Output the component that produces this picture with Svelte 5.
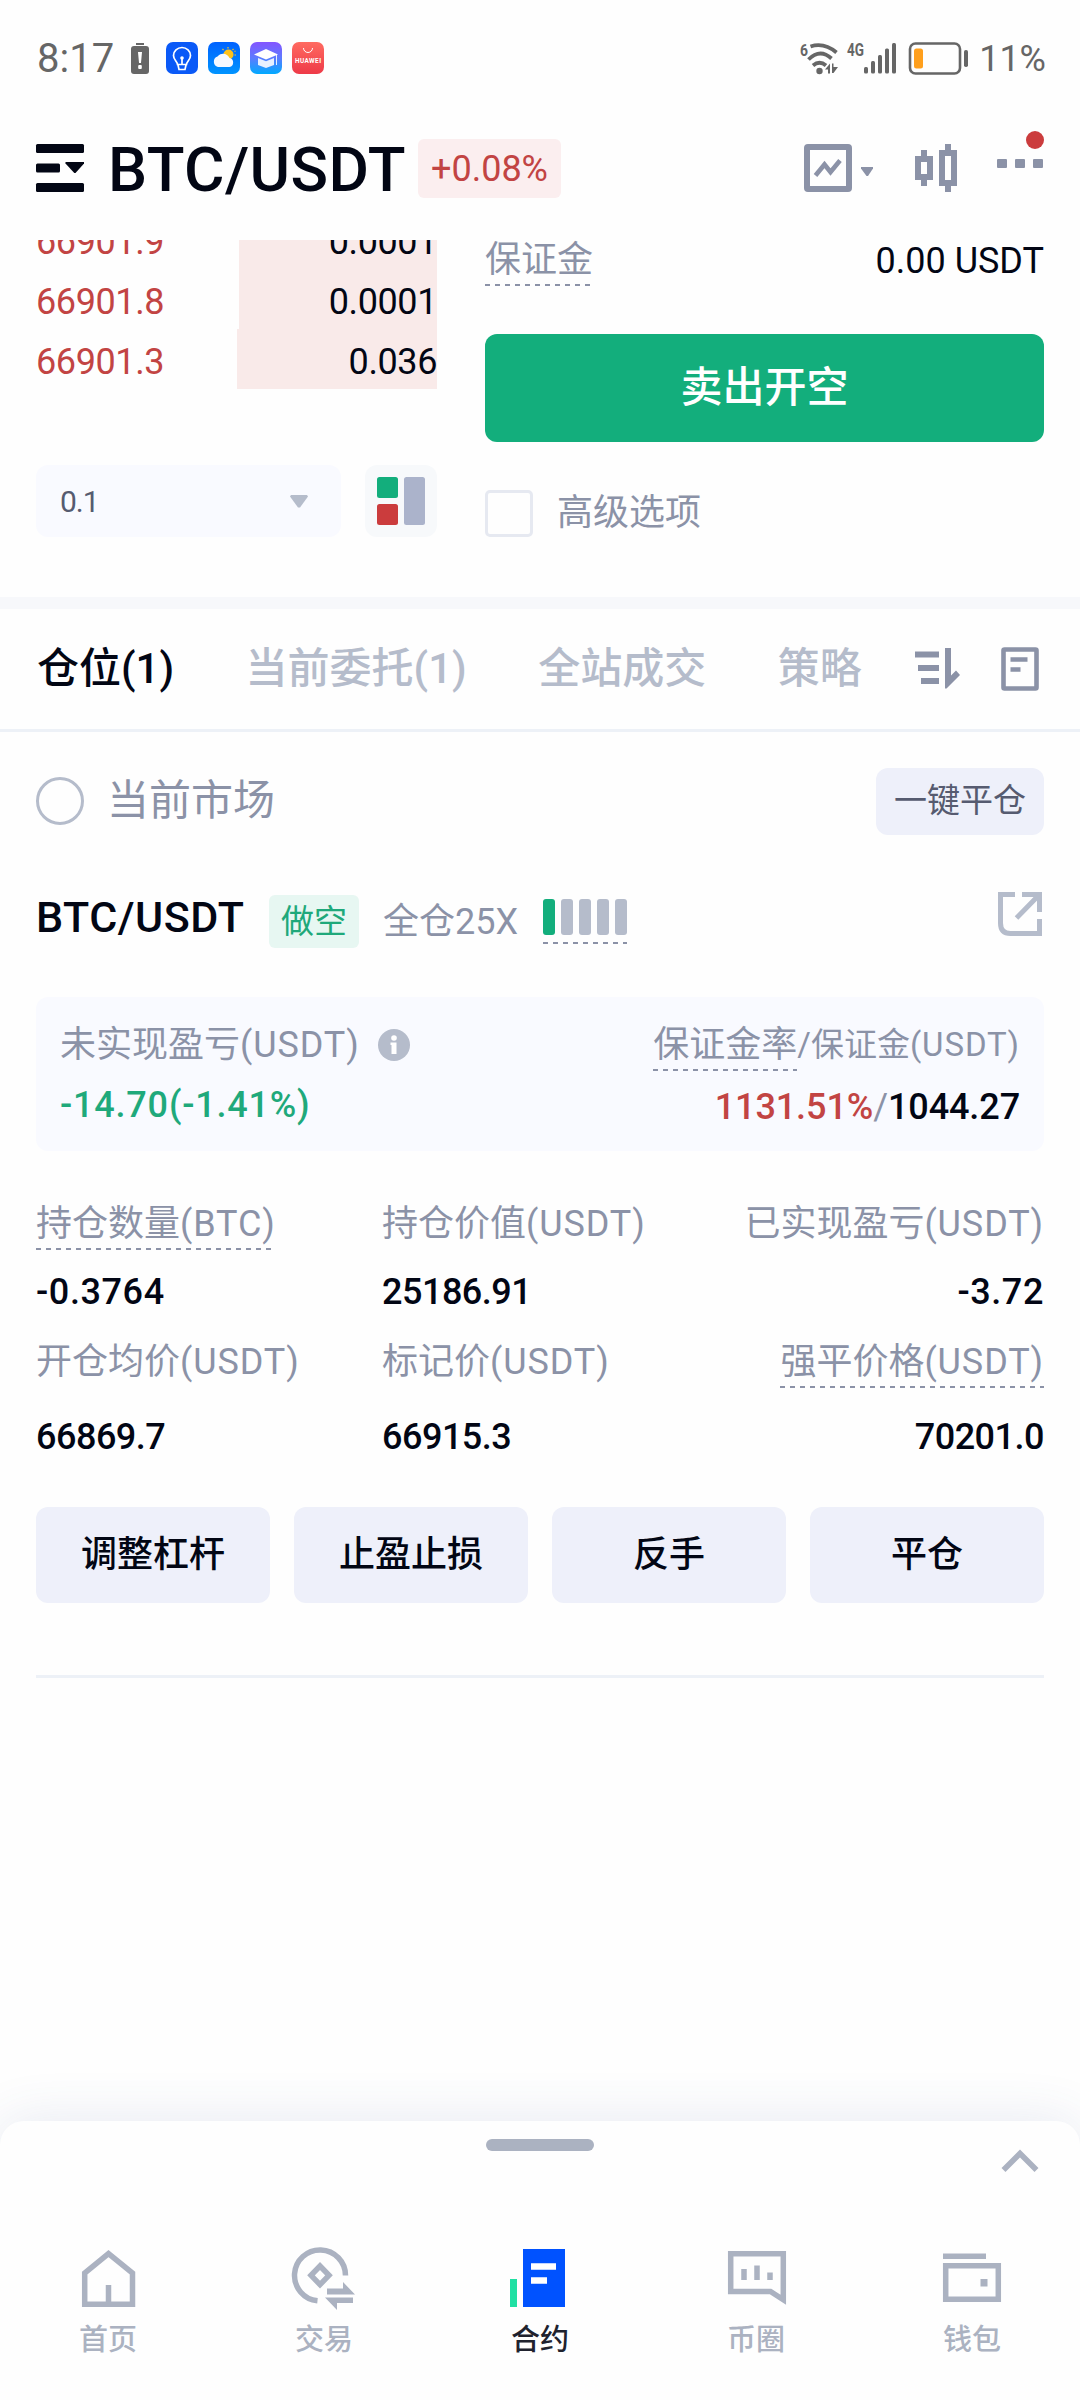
<script>
    let activeTab = 0;
    let onlyCurrent = false;
    let advanced = false;
    let activeNav = 2;

    const asks = [
        { price: '66901.9', amount: '0.0001', depth: 198 },
        { price: '66901.8', amount: '0.0001', depth: 198 },
        { price: '66901.3', amount: '0.036', depth: 200 }
    ];

    const tabs = ['仓位(1)', '当前委托(1)', '全站成交', '策略'];

    // two groups of three columns, labels above values
    const stats = [
        [
            { name: '持仓数量', unit: '(BTC)', value: '-0.3764', hint: true },
            { name: '持仓价值', unit: '(USDT)', value: '25186.91' },
            { name: '已实现盈亏', unit: '(USDT)', value: '-3.72' }
        ],
        [
            { name: '开仓均价', unit: '(USDT)', value: '66869.7' },
            { name: '标记价', unit: '(USDT)', value: '66915.3' },
            { name: '强平价格', unit: '(USDT)', value: '70201.0', hint: true }
        ]
    ];

    const actions = ['调整杠杆', '止盈止损', '反手', '平仓'];
    const nav = ['首页', '交易', '合约', '币圈', '钱包'];
</script>

<div class="page">
    <div class="status">
        <span class="time">8:17</span>
        <svg class="low" width="18" height="31" viewBox="0 0 18 31">
            <rect x="5" y="0" width="8" height="2" fill="#666" />
            <rect x="0" y="3" width="18" height="28" rx="3" fill="#666" />
            <path d="M7 9h4l-1 11H8z" fill="#fff" />
            <rect x="7.2" y="22" width="3.6" height="4" rx="1" fill="#fff" />
        </svg>
        <div class="apps">
            <svg width="32" height="32" viewBox="0 0 32 32">
                <rect width="32" height="32" rx="7" fill="#0a59f7" />
                <path d="M11.500 22.500c0-3-4-4.500-4-9a8.500 8 0 0 1 17 0c0 4.500-4 6-4 9zM12 23l1 4.500h6l1-4.500M16 17v5" fill="none" stroke="#fff" stroke-width="1.700" />
                <circle cx="16" cy="16" r="1.800" fill="#fff" />
            </svg>
            <svg width="32" height="32" viewBox="0 0 32 32">
                <defs>
                    <linearGradient id="sky" x2="0" y2="1"><stop stop-color="#0062ff" /><stop offset="1" stop-color="#0094ff" /></linearGradient>
                </defs>
                <rect width="32" height="32" rx="7" fill="url(#sky)" />
                <circle cx="20.500" cy="12.500" r="5" fill="#ffc21a" />
                <path d="M20 5v1.500M14.500 7l1 1.200M25.500 7l-1 1M28 13h-1.500M26.500 9.500l1-.5" stroke="#ffc21a" stroke-width="1.200" />
                <path d="M10 25a5.500 5.500 0 0 1-.5-10.500A7 7 0 0 1 21.500 16a4.600 4.600 0 0 1 0 9z" fill="#f6f9ff" />
            </svg>
            <svg width="32" height="32" viewBox="0 0 32 32">
                <defs>
                    <linearGradient id="edu" x2="0" y2="1"><stop stop-color="#8455ff" /><stop offset=".5" stop-color="#5d7bff" /><stop offset="1" stop-color="#00aaff" /></linearGradient>
                </defs>
                <rect width="32" height="32" rx="7" fill="url(#edu)" />
                <path d="M4 12.500L16 7l12 5.500-12 5z" fill="#fff" />
                <path d="M8 16l8 3.300 8-3.300v7l-8 3-8-3z" fill="#e8f0ff" />
                <path d="M26.500 13v10" stroke="#e8f0ff" stroke-width="1" />
            </svg>
            <svg width="32" height="32" viewBox="0 0 32 32">
                <defs>
                    <linearGradient id="shop" x2="0" y2="1"><stop stop-color="#ff6a60" /><stop offset="1" stop-color="#ee3a48" /></linearGradient>
                </defs>
                <rect width="32" height="32" rx="7" fill="url(#shop)" />
                <path d="M11.500 6a4.500 4.500 0 0 0 9 0" fill="none" stroke="#fff" stroke-width="1" />
                <text x="16" y="20.500" font-size="6.400" font-weight="700" fill="#fff" text-anchor="middle" textLength="26">HUAWEI</text>
            </svg>
        </div>
        <div class="signals">
            <svg width="168" height="34" viewBox="0 0 168 34" fill="#666">
                <text x="0" y="14.500" font-size="17" font-weight="700" textLength="8" lengthAdjust="spacingAndGlyphs">6</text>
                <g fill="none" stroke="#666" stroke-width="3.800">
                    <path d="M10.500 5.500Q24 1 36.500 11.500" />
                    <path d="M8.500 18.500Q20 7 31.500 17.500" />
                    <path d="M13 24.500Q19.500 19 26 24.500" />
                </g>
                <circle cx="19.500" cy="30" r="3.200" />
                <path d="M25 28.500l5-6v10h-2v-4zM32 22.500h1.500v3.500h4.500l-4.500 6h-1.500z" />
                <text x="47" y="14.500" font-size="18" font-weight="700" textLength="17" lengthAdjust="spacingAndGlyphs">4G</text>
                <rect x="64" y="26" width="4" height="6.500" rx="1.500" />
                <rect x="71" y="20" width="4" height="12.500" rx="1.500" />
                <rect x="78" y="14" width="4" height="18.500" rx="1.500" />
                <rect x="85" y="7.500" width="4" height="25" rx="1.500" />
                <rect x="92" y="2" width="4" height="30.500" rx="1.500" />
                <rect x="110" y="2.500" width="50" height="30" rx="5.500" fill="none" stroke="#666" stroke-width="2.600" />
                <rect x="114" y="7.500" width="9" height="20" rx="2.500" fill="#ff9f1c" />
                <rect x="164" y="9" width="4" height="17" rx="1.800" />
            </svg>
            <span class="percent">11%</span>
        </div>
    </div>

    <header>
        <svg width="48" height="48" viewBox="0 0 48 48" fill="#020614">
            <rect width="48" height="9" rx="1.500" />
            <rect y="19.500" width="24" height="9" rx="1.500" />
            <path d="M29.500 18h18.500v1.500l-8.500 9.500h-1.200l-8.800-9.500z" />
            <rect y="39" width="48" height="9" rx="1.500" />
        </svg>
        <h1>BTC/USDT</h1>
        <span class="change">+0.08%</span>
        <div class="tools">
            <svg width="69" height="48" viewBox="0 0 69 48">
                <rect x="3" y="3" width="42" height="42" rx="1" fill="none" stroke="#8b92a7" stroke-width="6" />
                <path d="M11.500 31.500L20.500 20.500l6 7.500 9.500-11.500" fill="none" stroke="#8b92a7" stroke-width="4.600" />
                <path d="M57 23h12v1.500L64 32h-1.500l-5.500-7.500z" fill="#8b92a7" />
            </svg>
            <svg width="42" height="48" viewBox="0 0 42 48" fill="#8b92a7">
                <path fill-rule="evenodd" d="M6 6h6v6h6v24h-6v6H6v-6H0V12h6zM6 18v12h6V18z" />
                <path fill-rule="evenodd" d="M30 0h6v6h6v36h-6v6h-6v-6h-6V6h6zM30 12v24h6V12z" />
            </svg>
            <div class="more">
                <i></i><i></i><i></i>
                <b class="dot"></b>
            </div>
        </div>
    </header>

    <section class="trade">
        <div class="book">
            <div class="asks">
                {#each asks as row}
                    <div class="ask">
                        <span class="price">{row.price}</span>
                        <span class="amount" style="width: {row.depth}px">{row.amount}</span>
                    </div>
                {/each}
            </div>
            <div class="book-controls">
                <div class="precision">
                    <span>0.1</span>
                    <svg width="18" height="13" viewBox="0 0 18 13"><path d="M1 0h16l1 1.500L10 12.500H8L0 1.500z" fill="#b5bccb" /></svg>
                </div>
                <div class="layout">
                    <svg width="48" height="48" viewBox="0 0 48 48">
                        <rect width="21" height="21" rx="2.500" fill="#13ae7c" />
                        <rect y="27" width="21" height="21" rx="2.500" fill="#cb3c3d" />
                        <rect x="27" width="21" height="48" rx="2.500" fill="#abb3cb" />
                    </svg>
                </div>
            </div>
        </div>
        <div class="order">
            <div class="margin-row">
                <span class="hint">保证金</span>
                <span class="margin-value">0.00 USDT</span>
            </div>
            <button class="sell">卖出开空</button>
            <div class="advanced" on:click={() => (advanced = !advanced)}>
                <span class="checkbox {advanced ? 'checked' : ''}"></span>
                <span>高级选项</span>
            </div>
        </div>
    </section>

    <div class="tabs">
        {#each tabs as tab, index}
            <span class="tab {activeTab === index ? 'active' : ''}" on:click={() => (activeTab = index)}>{tab}</span>
        {/each}
        <div class="tab-tools">
            <svg width="46" height="42" viewBox="0 0 46 42" fill="#8b92a7">
                <rect y="3.500" width="24" height="6" />
                <rect x="3" y="17" width="21" height="6" />
                <rect x="6" y="30" width="18" height="6" />
                <path d="M30 0h6v27.500l5-5 4 4.500-13.500 13.500H30z" />
            </svg>
            <svg width="38" height="44" viewBox="0 0 38 44">
                <rect x="2.500" y="2.500" width="33" height="39" rx="1" fill="none" stroke="#8b92a7" stroke-width="4.600" />
                <path d="M9.500 12.500h17M9.500 22.500h10" stroke="#8b92a7" stroke-width="4.600" />
            </svg>
        </div>
    </div>

    <div class="filter">
        <span class="radio {onlyCurrent ? 'checked' : ''}" on:click={() => (onlyCurrent = !onlyCurrent)}></span>
        <span class="filter-label">当前市场</span>
        <button class="close-all">一键平仓</button>
    </div>

    <article>
        <div class="pos-head">
            <h2>BTC/USDT</h2>
            <span class="side">做空</span>
            <span class="mode">全仓25X</span>
            <div class="risk">
                {#each [1, 0, 0, 0, 0] as on}
                    <i class:on={on}></i>
                {/each}
            </div>
            <svg class="share" width="44" height="44" viewBox="0 0 44 44" fill="none" stroke="#b5bccb" stroke-width="5">
                <path d="M17 2.500H2.500V31Q2.500 41.500 12.500 41.500H41.500V27" />
                <path d="M24 2.500H41.500V20M41 3L18.500 26" />
            </svg>
        </div>

        <div class="pnl">
            <div>
                <div class="label">
                    <span>未实现盈亏<span class="unit">(USDT)</span></span>
                    <svg width="32" height="32" viewBox="0 0 32 32">
                        <circle cx="16" cy="16" r="16" fill="#b5bccb" />
                        <circle cx="16" cy="9" r="2.800" fill="#fff" />
                        <path d="M12.500 13.500h6V25h-5V16h-1z" fill="#fff" />
                    </svg>
                </div>
                <div class="value green">-14.70(-1.41%)</div>
            </div>
            <div class="right">
                <div class="label"><span class="hint">保证金率</span><span class="small">/保证金<span class="unit">(USDT)</span></span></div>
                <div class="value"><span class="red">1131.51%</span><span class="slash">/</span>1044.27</div>
            </div>
        </div>

        <div class="stats">
            {#each stats as row}
                {#each row as item}
                    <div><span class="label" class:hint={item.hint}>{item.name}<span class="unit">{item.unit}</span></span></div>
                {/each}
                {#each row as item}
                    <div class="value" class:negative={item.value.startsWith('-')}>{item.value}</div>
                {/each}
            {/each}
        </div>

        <div class="actions">
            {#each actions as action}
                <button>{action}</button>
            {/each}
        </div>
    </article>

    <footer>
        <div class="handle-row">
            <span class="handle"></span>
            <svg width="38" height="24" viewBox="0 0 38 24"><path d="M2.500 21L19 4.500 35.500 21" fill="none" stroke="#abb2c1" stroke-width="5.600" /></svg>
        </div>
        <nav>
            {#each nav as name, index}
                <div class="nav-item {activeNav === index ? 'current' : ''}" on:click={() => (activeNav = index)}>
                    <svg width="72" height="66" viewBox="0 0 72 66" fill="none" stroke="#abb2c1" stroke-width="5.500">
                        {#if index === 0}
                            <path d="M12.700 59.200V28L36.500 8.500 60.500 28v31.200zM36.500 59V40" />
                        {:else if index === 1}
                            <path d="M57.500 30.500A25.500 25.500 0 1 0 29.500 55.800" />
                            <path d="M32 21l9 9.300-9 9.300-9-9.300z" />
                            <path d="M39 43.500h16V37l12 12.500H39zM37 52.500h28V58H49v7z" fill="#abb2c1" stroke="none" />
                        {:else if index === 2}
                            <path d="M6 34h7v28H6z" fill="#20e0a3" stroke="none" />
                            <path d="M19 4h42v58H19z" fill="#0052ff" stroke="none" />
                            <path d="M27 21.500h25M27 35.500h16" stroke="#fff" stroke-width="6.600" />
                        {:else if index === 3}
                            <path d="M10.700 8.700h52.600v46L50.500 46.500H10.700z" />
                            <path d="M24 24v11M37 20.500V35M50 27.500V35" />
                        {:else}
                            <path d="M7 11.200h43M9.700 20.700h52.600v33.600H9.700z" />
                            <path d="M44.500 34h7v7.500h-7z" fill="#abb2c1" stroke="none" />
                        {/if}
                    </svg>
                    <span>{name}</span>
                </div>
            {/each}
        </nav>
    </footer>
</div>

<style>
    :global(body) {
        background: #fff;
        overflow: hidden;
    }

    .page {
        display: flex;
        flex-direction: column;
        width: 1080px;
        height: 2400px;
        background: #fefefe;
        color: #020614;
        font-family: Roboto, "Noto Sans CJK SC", sans-serif;
        font-size: 36px;
        line-height: 48px;
    }

    button {
        border: none;
        padding: 0;
        font: inherit;
        color: inherit;
        cursor: pointer;
    }

    svg {
        display: block;
        flex: none;
        overflow: visible;
    }

    /* status bar */
    .status {
        display: flex;
        align-items: center;
        height: 116px;
        padding: 0 34px 0 37px;
        color: #666;
    }

    .time {
        width: 94px;
        padding-top: 2px;
        font-size: 40px;
    }

    .apps {
        display: flex;
        gap: 10px;
        margin-left: 17px;
    }

    .signals {
        display: flex;
        align-items: center;
        gap: 11px;
        margin-left: auto;
    }

    .percent {
        padding-top: 2px;
    }

    /* header */
    header {
        display: flex;
        align-items: center;
        height: 104px;
        margin-bottom: 20px;
        padding: 0 36px;
    }

    h1 {
        box-sizing: border-box;
        width: 310px;
        margin: 0 0 0 24px;
        padding-top: 3px;
        font-size: 62px;
        font-weight: 500;
        line-height: 72px;
        letter-spacing: 0.4px;
    }

    .change {
        width: 143px;
        height: 59px;
        line-height: 60px;
        text-align: center;
        border-radius: 6px;
        background: #fbeeef;
        color: #c24443;
    }

    .tools {
        display: flex;
        align-items: center;
        gap: 42px;
        margin-left: auto;
    }

    .more {
        position: relative;
        display: flex;
        gap: 8px;
        width: 47px;
        margin: -9px 0 0 -2px;
    }

    .more i {
        width: 10px;
        height: 9px;
        border-radius: 1px;
        background: #8b92a7;
    }

    .dot {
        position: absolute;
        top: -28px;
        right: 0;
        width: 18px;
        height: 18px;
        border-radius: 50%;
        background: #cb3c3d;
    }

    /* order book and form */
    .trade {
        display: flex;
        justify-content: space-between;
        height: 357px;
        padding: 0 36px;
        border-bottom: 12px solid #f7f8fb;
    }

    .book {
        width: 401px;
    }

    .asks {
        display: flex;
        flex-direction: column;
        justify-content: flex-end;
        height: 149px;
        overflow: hidden;
    }

    .ask {
        display: flex;
        flex: none;
        justify-content: space-between;
        height: 60px;
        line-height: 66px;
        letter-spacing: -0.4px;
    }

    .price {
        color: #c24443;
    }

    .amount {
        background: #f9eae9;
        text-align: right;
    }

    .book-controls {
        display: flex;
        justify-content: space-between;
        margin-top: 76px;
    }

    .precision {
        display: flex;
        align-items: center;
        justify-content: space-between;
        box-sizing: border-box;
        width: 305px;
        height: 72px;
        padding: 0 33px 0 24px;
        border-radius: 12px;
        background: #f9faff;
        color: #565b70;
        font-size: 30px;
        letter-spacing: -1px;
    }

    .precision span {
        padding-top: 1px;
    }

    .layout {
        padding: 12px;
        border-radius: 12px;
        background: #f7f9fb;
    }

    .order {
        width: 559px;
    }

    .margin-row {
        display: flex;
        justify-content: space-between;
        align-items: flex-start;
        margin-top: -4px;
        height: 98px;
        color: #8b92a7;
    }

    .margin-value {
        padding-top: 1px;
        color: #020614;
    }

    /* dotted underline marking terms with an explanation */
    .hint {
        display: inline-block;
        padding-bottom: 2px;
        background: repeating-linear-gradient(90deg, #8b92a7 0 5px, transparent 5px 10px) 0 100% / 100% 2px no-repeat;
    }

    .sell {
        display: block;
        width: 100%;
        height: 108px;
        border-radius: 12px;
        background: #13ae7c;
        color: #fff;
        font-size: 42px;
        font-weight: 500;
    }

    .advanced {
        display: flex;
        align-items: center;
        gap: 24px;
        margin-top: 47px;
        color: #8b92a7;
    }

    .checkbox {
        box-sizing: border-box;
        width: 48px;
        height: 47px;
        border: 3px solid #e6e9f1;
        border-radius: 5px;
    }

    .checkbox.checked {
        background: #13ae7c;
    }

    /* tabs */
    .tabs {
        display: flex;
        align-items: center;
        height: 120px;
        padding: 0 41px 0 37px;
        border-bottom: 3px solid #edf1f7;
        color: #b5bccb;
        font-size: 42px;
        font-weight: 500;
    }

    .tab {
        margin-right: 71.5px;
        white-space: nowrap;
        cursor: pointer;
    }

    .tab.active {
        color: #020614;
    }

    .tab-tools {
        display: flex;
        align-items: center;
        gap: 40px;
        margin-left: auto;
    }

    .tab:nth-child(4) {
        margin-right: 0;
    }

    .filter {
        display: flex;
        align-items: center;
        height: 138px;
        padding: 0 36px;
        color: #8b92a7;
        font-size: 42px;
    }

    .radio {
        box-sizing: border-box;
        width: 48px;
        height: 48px;
        border: 3px solid #b5bccb;
        border-radius: 50%;
    }

    .radio.checked {
        border-width: 14px;
    }

    .filter-label {
        margin-left: 23px;
    }

    .close-all {
        width: 168px;
        height: 67px;
        margin-left: auto;
        border-radius: 12px;
        background: #eef0fa;
        color: #565b70;
        font-size: 33px;
    }

    /* position */
    article {
        margin: 0 36px;
        border-bottom: 3px solid #edf1f7;
    }

    .pos-head {
        display: flex;
        align-items: center;
        height: 102px;
    }

    h2 {
        width: 233px;
        margin: -9px 0 0;
        font-size: 43px;
        font-weight: 500;
        letter-spacing: 0.5px;
    }

    .side {
        width: 90px;
        height: 53px;
        line-height: 54px;
        text-align: center;
        border-radius: 6px;
        background: #e7f7f2;
        color: #1fa97b;
        font-size: 33px;
    }

    .mode {
        width: 136px;
        margin-left: 24px;
        padding-top: 1px;
        color: #8b92a7;
    }

    .risk {
        display: flex;
        gap: 6px;
        margin: 1px 0 0 24px;
        padding-bottom: 9px;
        background: repeating-linear-gradient(90deg, #8b92a7 0 5px, transparent 5px 10px) 0 100% / 100% 2px no-repeat;
    }

    .risk i {
        width: 12px;
        height: 36px;
        border-radius: 3px;
        background: #b5bccb;
    }

    .risk i.on {
        background: #13ae7c;
    }

    .share {
        margin: -14px 2px 0 auto;
    }

    .pnl {
        display: flex;
        justify-content: space-between;
        box-sizing: border-box;
        height: 154px;
        margin-top: 25px;
        padding: 24px 24px 0;
        border-radius: 12px;
        background: #f9faff;
    }

    .pnl .label {
        display: flex;
        align-items: center;
        gap: 18px;
    }

    .pnl .value {
        margin-top: 12px;
    }

    .pnl .right {
        text-align: right;
    }

    .pnl .right .label {
        align-items: flex-start;
        gap: 0;
    }

    .pnl .right .value {
        letter-spacing: -0.1px;
    }

    .small {
        font-size: 33px;
    }

    .label {
        color: #8b92a7;
        white-space: nowrap;
    }

    .unit {
        letter-spacing: 0.9px;
    }

    .value {
        font-weight: 500;
    }

    .pnl .green {
        color: #1fa97b;
        letter-spacing: 0.8px;
    }

    .red {
        color: #c24443;
    }

    .slash {
        color: #8b92a7;
        font-weight: 400;
    }

    .stats {
        display: grid;
        grid-template-columns: 346px 316px 346px;
        grid-template-rows: 68px 70px 75px 47px;
        margin: 49px 0 47px;
    }

    .stats > :nth-child(3n) {
        text-align: right;
    }

    .stats .value {
        letter-spacing: -0.5px;
    }

    .stats .value.negative {
        letter-spacing: 0.6px;
    }

    .actions {
        display: grid;
        grid-template-columns: repeat(4, 1fr);
        gap: 24px;
        margin-bottom: 72px;
    }

    .actions button {
        height: 96px;
        border-radius: 12px;
        background: #eef0fa;
        font-weight: 500;
    }

    /* bottom sheet with navigation */
    footer {
        height: 279px;
        margin-top: auto;
        border-radius: 24px 24px 0 0;
        background: #fefefe;
        box-shadow: 0 0 54px rgba(60, 80, 150, 0.12);
    }

    .handle-row {
        display: grid;
        grid-template-columns: 1fr 108px 1fr;
        height: 106px;
        padding: 18px 41px 0;
        box-sizing: border-box;
    }

    .handle {
        grid-column: 2;
        height: 12px;
        border-radius: 6px;
        background: #abb2c1;
    }

    .handle-row svg {
        justify-self: end;
        margin-top: 10px;
    }

    nav {
        display: grid;
        grid-template-columns: repeat(5, 1fr);
        margin-top: 18px;
    }

    .nav-item {
        display: flex;
        flex-direction: column;
        align-items: center;
        gap: 9px;
        color: #abb2c1;
        font-size: 29px;
        font-weight: 500;
        line-height: 40px;
    }

    .nav-item.current {
        color: #20222e;
    }
</style>
